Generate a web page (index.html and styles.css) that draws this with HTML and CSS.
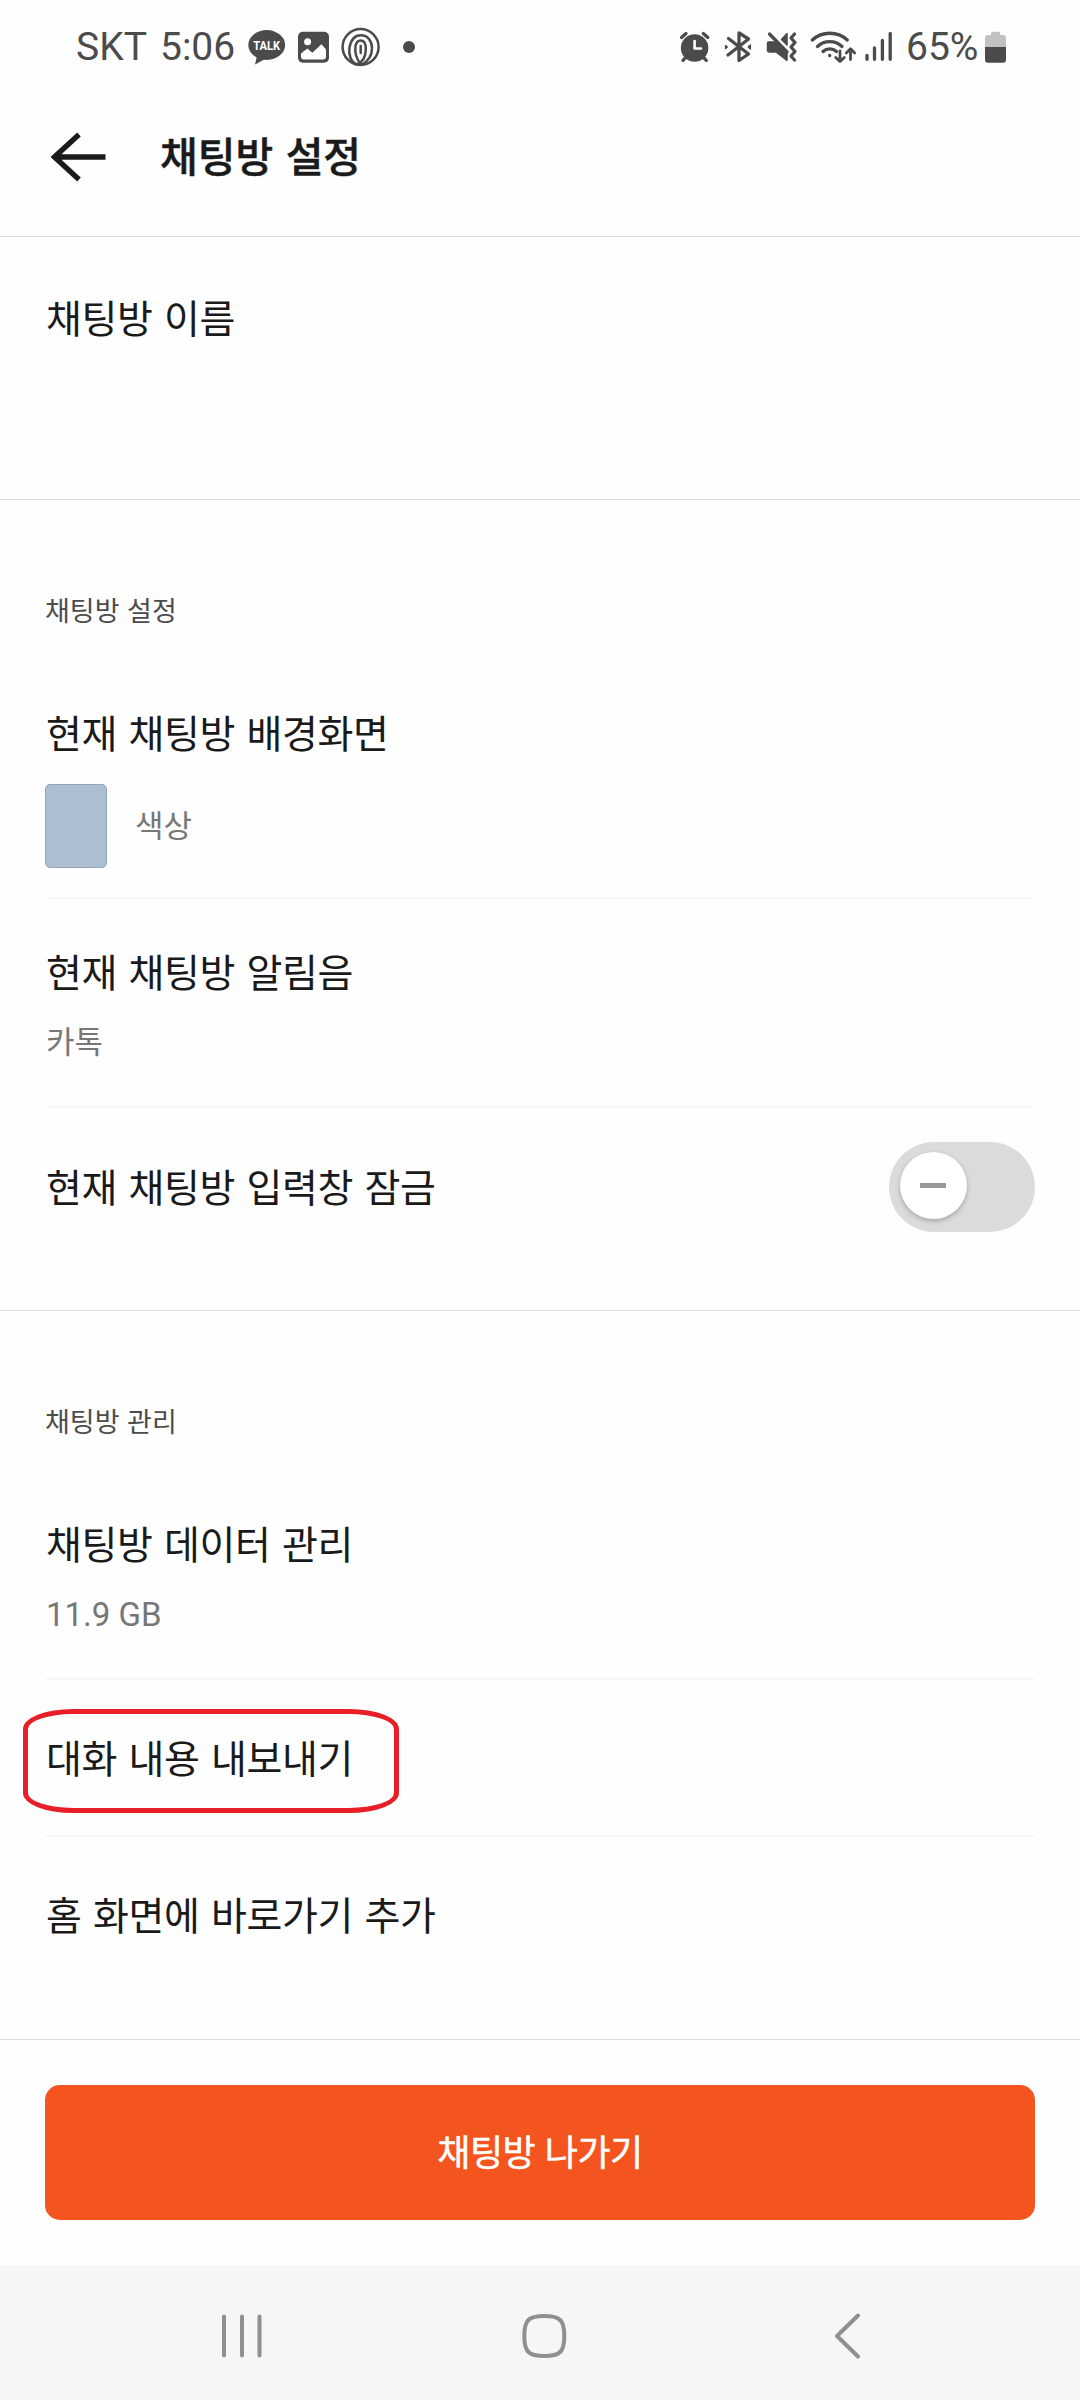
FILE: index.html
```html
<!DOCTYPE html>
<html lang="ko">
<head>
<meta charset="utf-8">
<title>채팅방 설정</title>
<link rel="stylesheet" href="styles.css">
</head>
<body>
<div class="screen">
  <div class="status">
    <span class="carrier">SKT</span>
    <span class="clock">5:06</span>
    <svg class="glyph" width="40" height="48" viewBox="246 23 40 48">
      <ellipse cx="266.7" cy="45" rx="18.4" ry="15"/>
      <path d="M257 56 L255 64.5 L267 58Z"/>
      <text class="talk" x="253.2" y="50" textLength="27" lengthAdjust="spacingAndGlyphs">TALK</text>
    </svg>
    <svg class="glyph" width="50" height="48" viewBox="286 23 50 48">
      <rect x="298" y="31.8" width="31" height="31" rx="5"/>
      <circle class="paper" cx="307.6" cy="41.8" r="3.5"/>
      <path class="paper" d="M301 53.5 L307.3 48.5 L312.3 52.7 L321.5 44.3 L326 49.5 V57 Q326 59.4 323.5 59.4 H303.5 Q301 59.4 301 57Z"/>
    </svg>
    <svg class="line swirl" width="50" height="48" viewBox="336 23 50 48">
      <circle cx="360.600" cy="47" r="18"/>
      <path d="M356 64 C350.500 61.500 348.500 54 349.500 47.500 C351 39.500 355.500 35.300 361 35.300 C367.500 35.300 372 41 372 48 C372 56 367.500 61.500 362 64.500"/>
      <path d="M361 64 C356.500 60 354.500 52 355.500 46 C356.300 42.500 358 40.500 360.600 40.500 C364 40.500 365.800 44 365.800 49 C365.800 57 362.500 62.500 356.500 64.500"/>
      <path d="M360.700 46 V53"/>
    </svg>
    <svg class="glyph" width="40" height="48" viewBox="386 23 40 48"><circle cx="409" cy="47" r="6"/></svg>
    <span class="spacer"></span>
    <svg class="line" width="40" height="48" viewBox="676 23 40 48">
      <circle class="ink" cx="694.600" cy="48" r="13"/>
      <path d="M681.500 37.500 L686 33.500 M703.300 33.500 L707.800 37.500 M686 57 L683 60.300 M703 57 L706.300 60.300"/>
      <path class="hands" d="M694.600 41 V48.500 H701"/>
    </svg>
    <svg class="line" width="44" height="48" viewBox="716 23 44 48">
      <path d="M728.500 38.500 L748.500 54 L739 60.500 V32.800 L748.500 39 L728 55"/>
      <path class="thin" d="M725.600 45.500 L727.300 47 L725.600 48.500Z M750.300 45 L748.300 47 L750.300 49Z"/>
    </svg>
    <svg class="line" width="46" height="48" viewBox="760 23 46 48">
      <path class="ink" d="M767.500 43 Q767.500 42 768.500 42 H776 L787 53 V60.300 L776 52 H769.500 Q767.500 52 767.500 50Z"/>
      <path class="ink" d="M781.500 39.500 L787 33.500 V45Z"/>
      <path d="M769.500 34 L787 52"/>
      <path d="M794.500 34 L791 38 L795 42.500 L791 47 L795 51.500 L791 56 L794.500 60"/>
    </svg>
    <svg class="line" width="54" height="48" viewBox="806 23 54 48">
      <path d="M812.300 40 A26 26 0 0 1 847.300 40 M817.500 46.500 A18 18 0 0 1 842 46.500 M823 51.500 A10 10 0 0 1 836.500 51.500"/>
      <circle class="ink" cx="829.700" cy="55.500" r="1"/>
      <path class="arrows" d="M840 51 V61 M835.700 57.500 L840 61.500 L844.300 57.500 M850.500 59.500 V49 M846.300 53 L850.500 48.800 L854.700 53"/>
    </svg>
    <svg class="line" width="46" height="48" viewBox="860 23 46 48">
      <path d="M867 55.500 V59.300 M874.500 48 V59.300 M882.400 40.500 V59.300 M890.200 33.500 V59.300"/>
    </svg>
    <span class="percent">65%</span>
    <svg class="glyph" width="22" height="48" viewBox="984 23 22 48">
      <path class="empty" d="M991 35 V33.500 Q991 31.700 993 31.700 H998 Q1000 31.700 1000 33.500 V35 H1003 Q1006 35 1006 38 V47 H985 V38 Q985 35 988 35Z"/>
      <path d="M985 47 H1006 V59.500 Q1006 62.700 1003 62.700 H988 Q985 62.700 985 59.500Z"/>
    </svg>
  </div>

  <header class="header">
    <svg class="back" width="56" height="50" viewBox="51 132 56 50"><path d="M79 134.500 L54.500 157 L79 179.500 M54.500 157 H105.500"/></svg>
    <h1 class="title">채팅방 설정</h1>
  </header>

  <section class="section name-section">
    <div class="row-title">채팅방 이름</div>
  </section>

  <section class="section room-section">
    <h2 class="label">채팅방 설정</h2>
    <div class="row wallpaper">
      <div class="row-title">현재 채팅방 배경화면</div>
      <div class="swatch-line"><span class="swatch"></span><span class="sub">색상</span></div>
    </div>
    <div class="row sound">
      <div class="row-title">현재 채팅방 알림음</div>
      <div class="sub">카톡</div>
    </div>
    <div class="row lock">
      <div class="row-title">현재 채팅방 입력창 잠금</div>
      <div class="toggle"><div class="knob"><span class="minus"></span></div></div>
    </div>
  </section>

  <section class="section manage-section">
    <h2 class="label">채팅방 관리</h2>
    <div class="row data">
      <div class="row-title">채팅방 데이터 관리</div>
      <div class="sub size">11.9 GB</div>
    </div>
    <div class="row export">
      <div class="row-title">대화 내용 내보내기</div>
      <div class="highlight"></div>
    </div>
    <div class="row shortcut">
      <div class="row-title">홈 화면에 바로가기 추가</div>
    </div>
  </section>

  <footer class="footer"><button class="leave">채팅방 나가기</button></footer>

  <nav class="nav">
    <svg width="48" height="50" viewBox="218 2311 48 50"><path d="M224 2316.500 V2355.500 M242 2316.500 V2355.500 M259.500 2316.500 V2355.500"/></svg>
    <svg width="50" height="50" viewBox="519 2311 50 50"><path d="M544.300 2316 C560 2316 564.300 2320 564.300 2336 C564.300 2352 560 2356 544.300 2356 C528.600 2356 524.300 2352 524.300 2336 C524.300 2320 528.600 2316 544.300 2316Z"/></svg>
    <svg width="32" height="50" viewBox="832 2311 32 50"><path d="M858 2315.500 L837 2336 L858 2356.500"/></svg>
  </nav>
</div>
</body>
</html>
```
FILE: styles.css
```css
* { box-sizing: border-box; }

body {
  margin: 0;
  background: #fefefe;
  color: #1a1a1a;
  font-family: "Noto Sans CJK KR", sans-serif;
}

.screen {
  display: flex;
  flex-direction: column;
  width: 1080px;
  height: 2400px;
}

/* Status bar */
.status {
  display: flex;
  align-items: center;
  height: 80px;
  padding: 14px 74px 0 76px;
  color: #4b4b4b;
  font: 400 39px/48px Roboto, sans-serif;
}
.status svg { flex: none; }
.carrier { width: 84px; }
.clock { width: 86px; }
.percent { width: 78px; white-space: nowrap; }
.spacer { flex: 1; }
.glyph { fill: #4b4b4b; }
.glyph .paper { fill: #fefefe; }
.glyph .empty { fill: #c1c1c1; }
.talk { fill: #fefefe; font: 700 13px Roboto, sans-serif; }
.line {
  fill: none;
  stroke: #4b4b4b;
  stroke-width: 3.3;
  stroke-linecap: round;
  stroke-linejoin: round;
}
.line .ink { fill: #4b4b4b; stroke-width: 1.5; }
.line .thin { stroke-width: 1.5; }
.line .arrows { stroke-width: 2.8; }
.line .hands { stroke: #fefefe; stroke-width: 2.6; }
.swirl { stroke-width: 2.5; }

/* Header */
.header {
  display: flex;
  align-items: center;
  gap: 53px;
  height: 157px;
  padding: 0 51px 3px;
  border-bottom: 1px solid #dedede;
}
.back { fill: none; stroke: #1a1a1a; stroke-width: 5.3; }
.title {
  margin: 0;
  padding-bottom: 6px;
  font-size: 41px;
  font-weight: 500;
  line-height: 56px;
  word-spacing: 1px;
  -webkit-text-stroke: .5px #1a1a1a;
}

/* Sections */
.section {
  padding: 0 45px;
  border-bottom: 1px solid #dedede;
}
.name-section { height: 263px; padding-top: 55px; }
.room-section { height: 811px; padding-top: 90px; }
.manage-section { height: 729px; padding-top: 90px; }

.label {
  margin: 0;
  color: #4c4c4c;
  font-size: 27px;
  font-weight: 400;
  line-height: 40px;
}
.row { border-bottom: 2px solid #f7f7f7; }
.row:last-child { border-bottom: 0; }
.row-title {
  padding-left: 1px;
  font-size: 39px;
  letter-spacing: -.4px;
  line-height: 48px;
  word-spacing: 1px;
  white-space: nowrap;
}
.sub { padding-left: 1px; color: #777; font-size: 31px; line-height: 40px; }

.wallpaper { height: 269px; padding-top: 77px; }
.swatch-line {
  display: flex;
  align-items: center;
  gap: 27px;
  margin-top: 29px;
}
.swatch-line .sub { padding-bottom: 4px; }
.swatch {
  width: 62px;
  height: 84px;
  border: 1px solid #93a6b4;
  border-radius: 5px;
  background: #abbfd0;
}
.sound { height: 209px; padding-top: 47px; }
.sound .sub { margin-top: 26px; }
.lock {
  display: flex;
  align-items: center;
  justify-content: space-between;
  height: 158px;
}
.lock .row-title { padding-bottom: 4px; }
.toggle {
  width: 146px;
  height: 90px;
  padding: 10px 10.5px;
  border-radius: 45px;
  background: #dbdbdb;
}
.knob {
  display: flex;
  align-items: center;
  justify-content: center;
  width: 67px;
  height: 67px;
  border-radius: 50%;
  background: #fff;
  box-shadow: 0 2px 5px rgba(0, 0, 0, .25);
}
.minus { width: 26px; height: 5px; background: #999; }

.data { height: 239px; padding-top: 77px; }
.data .sub { margin-top: 29px; }
.size { font-family: Roboto, sans-serif; font-size: 33px; }
.export {
  position: relative;
  height: 157px;
  padding-top: 52px;
}
.highlight {
  position: absolute;
  top: 29px;
  left: -22px;
  width: 376px;
  height: 104px;
  border: 5px solid #e81f27;
  border-radius: 50px / 20px;
}
.shortcut { padding-top: 52px; }

/* Bottom action and navigation */
.footer { height: 225px; padding: 45px 45px 0; }
.leave {
  display: block;
  width: 990px;
  height: 135px;
  padding: 0 0 6px;
  border: 0;
  border-radius: 15px;
  background: #f4551e;
  color: #fff;
  font: 400 36px/48px "Noto Sans CJK KR", sans-serif;
  letter-spacing: -.5px;
  -webkit-text-stroke: .5px #fff;
}
.nav {
  display: flex;
  height: 135px;
  padding: 46px 0 0 218px;
  background: #f6f6f6;
}
.nav svg:nth-child(2) { margin: 0 263px 0 253px; }
.nav svg {
  fill: none;
  stroke: #909090;
  stroke-width: 4;
  stroke-linecap: round;
  stroke-linejoin: round;
}
```
